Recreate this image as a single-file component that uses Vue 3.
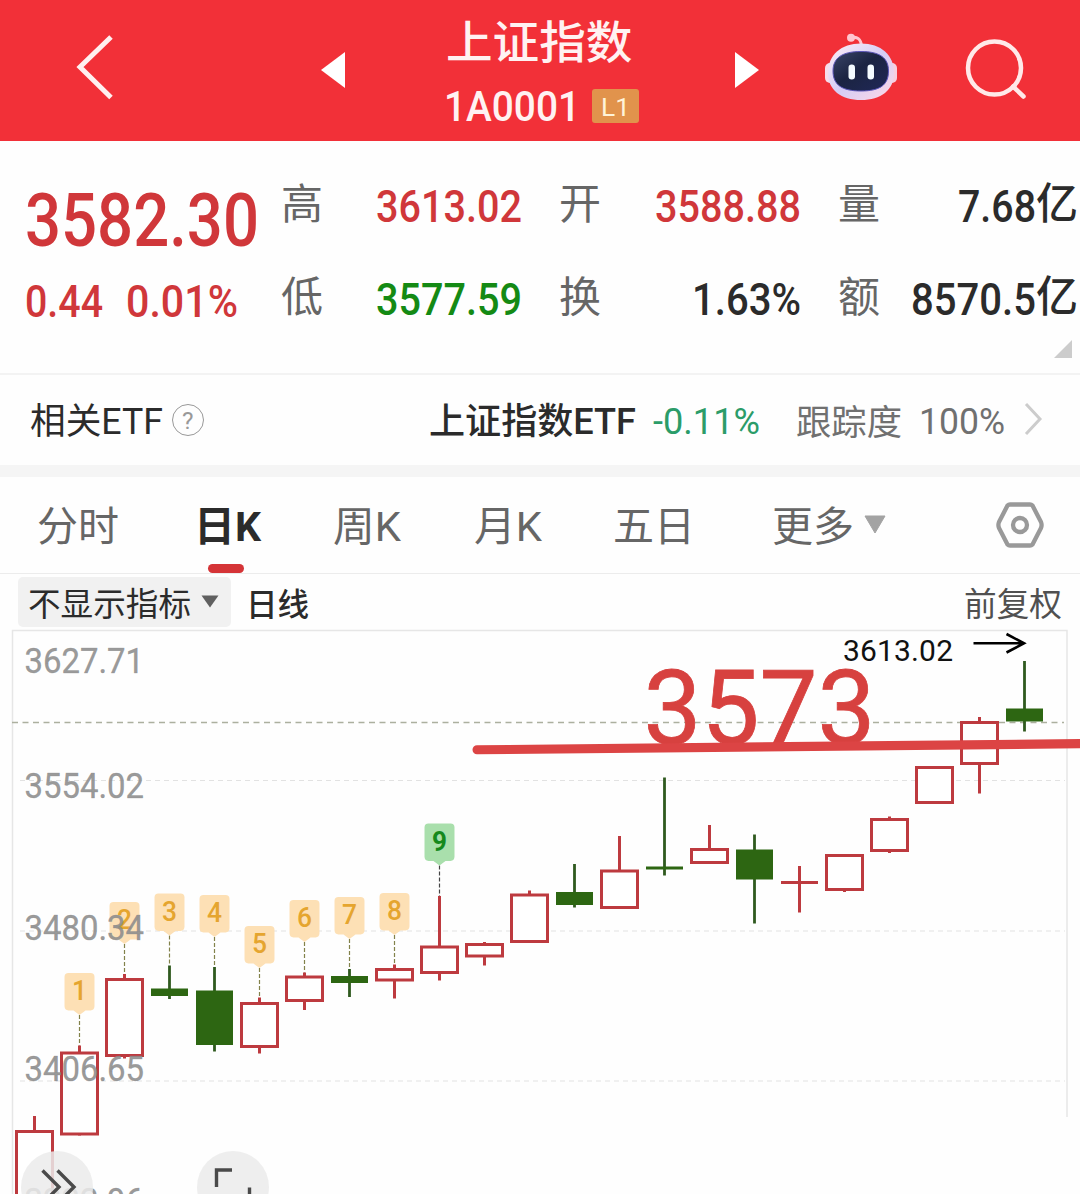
<script setup>
import { h } from 'vue'

// Single-line text fitted to a fixed advance width; its box ends on the baseline.
const FitText = (props) =>
  h('svg', { width: props.w, height: props.size, style: { display: 'block', overflow: 'visible', flex: 'none' } }, [
    h('text', {
      x: 0,
      y: props.size,
      'font-size': props.size,
      'font-weight': props.weight || 400,
      fill: 'currentColor',
      textLength: props.w,
      lengthAdjust: 'spacingAndGlyphs'
    }, props.text)
  ])
FitText.props = ['text', 'w', 'size', 'weight']

const tabs = [
  { text: '分时', w: 82, ml: 36.5 },
  { text: '日K', w: 67, ml: 75.5, active: true },
  { text: '周K', w: 68, ml: 72 },
  { text: '月K', w: 68, ml: 73 },
  { text: '五日', w: 82, ml: 71 },
  { text: '更多', w: 82, ml: 77 }
]

// [up, high, body top, body bottom, low]
const candles = [
  [1, 1116, 1130, 1230, 1230],
  [1, 1045.5, 1051.5, 1135.5, 1135.5],
  [1, 974, 978, 1057, 1058.5],
  [0, 965.5, 988.5, 996, 999],
  [0, 967, 990.5, 1045, 1051.5],
  [1, 997.5, 1002, 1048, 1053.5],
  [1, 972.5, 975.5, 1002, 1010],
  [0, 969, 976, 983, 997],
  [1, 964.5, 968, 981.5, 998.5],
  [1, 896, 945.5, 974, 980.5],
  [1, 942, 943, 957.5, 965.5],
  [1, 890.5, 893.5, 943, 943],
  [0, 864, 892, 905, 907.5],
  [1, 836, 869.5, 909, 909],
  [0, 777.5, 866.5, 869.5, 875.5],
  [1, 825, 848, 864, 864],
  [0, 834.5, 849.5, 879.5, 923.5],
  [1, 866, 881, 884, 912.5],
  [1, 854, 854, 891, 892],
  [1, 816.5, 818, 852, 853],
  [1, 766, 766, 804, 804],
  [1, 717, 721, 765, 793.5],
  [0, 661, 708.5, 721.5, 731.5]
].map(([up, high, top, bottom, low], i) => ({ up, high, top, bottom, low, x: 34.5 + 45 * i, cross: up && bottom - top < 5 }))

const tags = [973, 902, 893.5, 895, 926, 900, 897, 893, 823.5].map((y, i) => ({
  n: i + 1, x: 79.5 + 45 * i, y, end: candles[i + 1].high, green: i === 8
}))

const labels = [
  ['3627.71', 673], ['3554.02', 798], ['3480.34', 939.5], ['3406.65', 1081], ['3332.96', 1212.5]
]
</script>

<template>
  <div class="app">
    <header class="head">
      <svg class="back" width="40" height="70" viewBox="0 0 40 70"><path d="M36 5 5 35 36 65.500" fill="none" stroke="#fff0f0" stroke-width="5" /></svg>
      <svg class="prev" width="24" height="36" viewBox="0 0 24 36"><path d="M24 0V36L0 18Z" fill="#fff" /></svg>
      <div class="title">
        <FitText text="上证指数" :w="186.5" :size="45.5" weight="500" />
        <div class="code">
          <FitText text="1A0001" :w="136" :size="42" weight="500" />
          <span class="badge"><FitText text="L1" :w="29" :size="26.5" /></span>
        </div>
      </div>
      <svg class="next" width="24" height="36" viewBox="0 0 24 36"><path d="M0 0V36L24 18Z" fill="#fff" /></svg>
      <svg class="robot" width="74" height="70" viewBox="824 32 74 70">
        <defs>
          <linearGradient id="shell" x1="0" y1="0" x2="1" y2="1">
            <stop offset="0" stop-color="#fff0f6" /><stop offset=".5" stop-color="#d5cdf5" /><stop offset="1" stop-color="#ffd9e6" />
          </linearGradient>
          <linearGradient id="face" x1="0" y1="0" x2="1" y2="1">
            <stop offset="0" stop-color="#3a4568" /><stop offset=".45" stop-color="#1b2442" /><stop offset="1" stop-color="#202858" />
          </linearGradient>
        </defs>
        <path d="M851 38C857 36 861 39 861.500 46" fill="none" stroke="#ffc6cf" stroke-width="3" />
        <circle cx="851" cy="37.800" r="4" fill="#ffc6cf" />
        <rect x="825" y="63" width="12" height="20" rx="5" fill="#f7dcea" />
        <rect x="885" y="63" width="12" height="20" rx="5" fill="#f7cfe0" />
        <path d="M861 43.500C881 43.500 894 55 894 73C894 90 881 100 861 100C841 100 828 90 828 73C828 55 841 43.500 861 43.500Z" fill="url(#shell)" />
        <path d="M861 51.500C880 51.500 888.500 58 888.500 71C888.500 85 880 91 861 91C842 91 833 85 833 71C833 58 842 51.500 861 51.500Z" fill="url(#face)" stroke="#5a55b8" stroke-width="1" />
        <rect x="848.500" y="64.500" width="6.500" height="15" rx="3.200" fill="#f4fbff" />
        <rect x="867.500" y="64.500" width="6.500" height="15" rx="3.200" fill="#f4fbff" />
      </svg>
      <svg class="search" width="64" height="64" viewBox="964 37 64 64" fill="none" stroke="#ffe9e9" stroke-width="4.500">
        <circle cx="994.500" cy="68" r="26.500" /><path d="M1013 86.500 1023.500 96.500" stroke-linecap="round" />
      </svg>
    </header>

    <section class="quote">
      <div class="main red">
        <FitText text="3582.30" :w="234" :size="73.5" weight="500" />
        <div class="change">
          <FitText text="0.44" :w="78" :size="43.5" weight="500" />
          <FitText text="0.01%" :w="112" :size="43.5" weight="500" />
        </div>
      </div>
      <div class="cells c1">
        <div class="cell"><FitText class="lab" text="高" :w="42" :size="42" /><FitText class="red" text="3613.02" :w="146" :size="44" weight="500" /></div>
        <div class="cell"><FitText class="lab" text="低" :w="42" :size="42" /><FitText class="green" text="3577.59" :w="146" :size="44" weight="500" /></div>
      </div>
      <div class="cells c2">
        <div class="cell"><FitText class="lab" text="开" :w="42" :size="42" /><FitText class="red" text="3588.88" :w="146" :size="44" weight="500" /></div>
        <div class="cell"><FitText class="lab" text="换" :w="42" :size="42" /><FitText text="1.63%" :w="109" :size="44" weight="500" /></div>
      </div>
      <div class="cells c3">
        <div class="cell"><FitText class="lab" text="量" :w="42" :size="42" /><span class="num"><FitText text="7.68" :w="78" :size="44" weight="500" /><FitText class="unit" text="亿" :w="42" :size="43" weight="500" /></span></div>
        <div class="cell"><FitText class="lab" text="额" :w="42" :size="42" /><span class="num"><FitText text="8570.5" :w="125" :size="44" weight="500" /><FitText class="unit" text="亿" :w="42" :size="43" weight="500" /></span></div>
      </div>
      <i class="corner"></i>
    </section>

    <section class="etf">
      <FitText text="相关ETF" :w="133" :size="36" />
      <span class="help"><FitText text="?" :w="11.500" :size="24" /></span>
      <FitText class="etf-name" text="上证指数ETF" :w="207" :size="36" weight="500" />
      <FitText class="etf-chg" text="-0.11%" :w="107" :size="37" />
      <FitText class="etf-track" text="跟踪度" :w="106" :size="35.5" />
      <FitText class="etf-pct" text="100%" :w="86" :size="37" />
      <svg class="go" width="20" height="34" viewBox="0 0 20 34"><path d="M2 2 16 17 2 32" fill="none" stroke="#ccc" stroke-width="3" /></svg>
    </section>

    <nav class="tabs">
      <div v-for="t in tabs" :key="t.text" class="tab" :class="{ active: t.active }" :style="{ marginLeft: t.ml + 'px' }">
        <FitText :text="t.text" :w="t.w" :size="41" :weight="t.active ? 700 : 400" />
      </div>
      <svg class="more" width="22" height="19" viewBox="0 0 22 19"><path d="M1 1H21L11 18Z" fill="#a3a3a3" stroke="#a3a3a3" stroke-linejoin="round" /></svg>
      <svg class="gear" width="50" height="48" viewBox="0 0 50 48" fill="none" stroke="#999" stroke-width="4.300" stroke-linejoin="round">
        <path d="M12.500 4.500Q13.500 3.500 15 3.500H35Q36.500 3.500 37.500 4.500L46 21Q47.200 24 46 27L37.500 43.500Q36.500 44.500 35 44.500H15Q13.500 44.500 12.500 43.500L4 27Q2.800 24 4 21Z" /><circle cx="25" cy="24" r="7" />
      </svg>
    </nav>

    <div class="bar">
      <div class="pick">
        <FitText text="不显示指标" :w="163" :size="32.5" />
        <svg width="18" height="13" viewBox="0 0 18 13"><path d="M.5 .5H17.500L9 12.500Z" fill="#606060" /></svg>
      </div>
      <FitText class="line" text="日线" :w="63" :size="32" weight="500" />
      <FitText class="adj" text="前复权" :w="98" :size="32.5" />
    </div>

    <svg class="chart" width="1080" height="566" viewBox="0 628 1080 566">
      <path d="M12.500 1194V630.500H1067V1117" fill="none" stroke="#e6e6e6" stroke-width="1.500" />
      <g stroke="#e2e2e2" stroke-width="1.200" stroke-dasharray="5 4">
        <path d="M20 780.500H1065M20 931H1065M20 1081H1065" />
      </g>
      <path d="M12 722.500H1064" stroke="#acb09f" stroke-width="1.600" stroke-dasharray="6 4.500" />

      <g v-for="t in tags" :key="t.n">
        <path :d="`M${t.x} ${t.y + 42}V${t.end}`" :stroke="t.green ? '#444' : '#82824a'" stroke-width="1.200" stroke-dasharray="4 2" />
        <path :transform="`translate(${t.x} ${t.y})`" d="M-11 0H11Q15 0 15 4V33Q15 37 11 37.500H6L0 42-6 37.500H-11Q-15 37-15 33V4Q-15 0-11 0Z" :fill="t.green ? '#a9dfac' : '#fde0b5'" />
        <text :x="t.x" :y="t.y + 27" text-anchor="middle" font-size="28" :font-weight="t.green ? 700 : 500" :fill="t.green ? '#15891c' : '#e5a52f'" textLength="15" lengthAdjust="spacingAndGlyphs">{{ t.n }}</text>
      </g>

      <g v-for="c in candles" :key="c.x">
        <template v-if="c.up">
          <path :d="c.cross ? `M${c.x} ${c.high}V${c.low}M${c.x - 18.5} 882.500h37` : `M${c.x} ${c.high}V${c.top + 1}M${c.x} ${c.bottom - 1}V${c.low}`" stroke="#bd3a3f" stroke-width="3" />
          <rect v-if="!c.cross" :x="c.x - 18" :y="c.top + 1.5" width="36" :height="c.bottom - c.top - 3" fill="#fff" stroke="#bd3a3f" stroke-width="3" />
        </template>
        <template v-else>
          <path :d="`M${c.x} ${c.high}V${c.low}`" stroke="#2f5a1f" stroke-width="2.800" />
          <rect :x="c.x - 18.5" :y="c.top" width="37" :height="c.bottom - c.top" fill="#2d6612" />
        </template>
      </g>

      <text v-for="l in labels" :key="l[0]" x="24.500" :y="l[1]" font-size="35" fill="#8c8c8c" fill-opacity=".9" stroke="#8c8c8c" stroke-opacity=".6" stroke-width=".5" textLength="119.500" lengthAdjust="spacingAndGlyphs">{{ l[0] }}</text>

      <text x="643.500" y="744" font-size="104" fill="#d7413f" stroke="#d7413f" stroke-width=".8" textLength="232" lengthAdjust="spacingAndGlyphs">3573</text>
      <path d="M477 745.300 1082 739V748.300L477 754.300A4.500 4.500 0 0 1 477 745.300Z" fill="#dc4444" />
      <text x="843" y="660.500" font-size="30" fill="#111" textLength="110">3613.02</text>
      <path d="M973.500 643.300H1023M1006.500 634 1024 643.300 1006.500 652.500" fill="none" stroke="#000" stroke-width="2.600" />

      <g fill="#ebebeb" fill-opacity=".85"><circle cx="57" cy="1187" r="36" /><circle cx="233" cy="1187" r="36" /></g>
      <g fill="none" stroke="#4a4a4a" stroke-width="3.400">
        <path d="M42.500 1170.500 59 1187 42.500 1203.500M57.500 1170.500 74 1187 57.500 1203.500" />
        <path d="M216.500 1187V1170H232M249.500 1187.500V1204H234" />
      </g>
    </svg>
  </div>
</template>

<style>
body { background: #fff; }
</style>

<style scoped>
.app {
  width: 1080px;
  height: 1194px;
  overflow: hidden;
  background: #fefefe;
  color: #2b2b2b;
  font-family: Roboto, "Noto Sans CJK SC", sans-serif;
}
.head {
  display: flex;
  align-items: flex-start;
  box-sizing: border-box;
  height: 141px;
  background: #f23038;
  color: #fff2f2;
}
.back { margin: 32px 0 0 75px; }
.prev { margin: 52px 0 0 206px; }
.title { display: flex; flex-direction: column; width: 200px; margin: 12.5px 0 0 100px; }
.title > svg { margin-left: 1px; }
.code { display: flex; align-items: flex-start; height: 42px; margin: 21px 0 0 -1px; }
.badge {
  display: flex;
  flex: none;
  box-sizing: border-box;
  width: 47px;
  height: 34px;
  margin: 10px 0 0 12px;
  padding: 0 0 0 9px;
  border-radius: 3px;
  background: #e1934c;
  color: #fff3d8;
}
.next { margin: 52px 0 0 90px; }
.robot { margin: 32px 0 0 65px; }
.search { margin: 37px 0 0 66px; }

.quote {
  position: relative;
  display: flex;
  box-sizing: border-box;
  height: 234px;
  border-bottom: 2px solid #f3f3f3;
}
.main { width: 256.5px; padding: 30.5px 0 0 24.5px; }
.change { display: flex; gap: 23px; margin-top: 27.5px; }
.red { color: #d0373a; }
.green { color: #148a14; }
.lab { margin: -4px 0 0 -.5px; color: #666; }
.cells { display: flex; flex-direction: column; gap: 49px; padding-top: 36.5px; }
.cell { display: flex; justify-content: space-between; align-items: center; height: 44px; }
.c1 { width: 241px; }
.c2 { width: 242px; margin-left: 37px; }
.c3 { width: 240px; margin-left: 37px; }
.num { display: flex; }
.unit { margin-top: -1.5px; }
.corner {
  position: absolute;
  right: 8px;
  bottom: 15px;
  border-left: 18px solid transparent;
  border-bottom: 18px solid #ccc;
}

.etf {
  display: flex;
  align-items: flex-start;
  box-sizing: border-box;
  height: 102px;
  padding: 23px 0 0 30px;
  border-bottom: 12px solid #f5f5f5;
}
.help {
  display: flex;
  flex: none;
  justify-content: center;
  box-sizing: border-box;
  width: 32px;
  height: 32px;
  margin: 6px 0 0 9px;
  border: 1.5px solid #999;
  border-radius: 50%;
  color: #999;
}
.etf-name { margin-left: 225px; }
.etf-chg { margin: -1px 0 0 17px; color: #2b9c69; }
.etf-track { margin: .5px 0 0 36px; color: #707070; }
.etf-pct { margin: -1px 0 0 17px; color: #707070; }
.go { margin: 4px 0 0 19px; }

.tabs {
  display: flex;
  align-items: flex-start;
  box-sizing: border-box;
  height: 97px;
  border-bottom: 1.5px solid #ececec;
  color: #666;
}
.tab { flex: none; height: 97px; box-sizing: border-box; padding-top: 23px; }
.active { color: #2b2b2b; }
.active::after {
  content: "";
  display: block;
  width: 36px;
  height: 9px;
  margin: 23px 0 0 14px;
  border-radius: 5px;
  background: #d53437;
}
.more { margin: 38px 0 0 10px; }
.gear { margin: 24px 0 0 109px; }

.bar { display: flex; align-items: flex-start; height: 54px; }
.pick {
  display: flex;
  flex: none;
  box-sizing: border-box;
  width: 213px;
  height: 50px;
  margin: 3px 0 0 18px;
  padding: 6px 0 0 10px;
  border-radius: 5px;
  background: #f1f1f1;
}
.pick svg:last-child { margin: 12px 0 0 10px; }
.line { margin: 9.5px 0 0 15px; }
.adj { margin: 8.5px 0 0 654.5px; color: #505050; }
.chart { display: block; }
</style>
